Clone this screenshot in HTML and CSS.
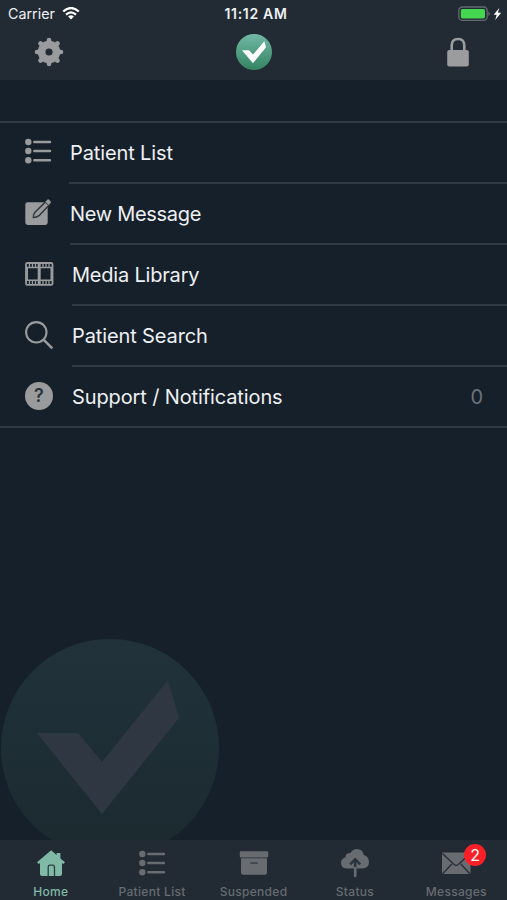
FILE: index.html
```
<!DOCTYPE html>
<html lang="en">
<head>
    <meta charset="utf-8">
    <meta name="viewport" content="width=device-width, initial-scale=1.0">
    <title>Home</title>
    <link rel="stylesheet" href="styles.css">
</head>
<body>

<svg class="defs" width="0" height="0">
    <defs>
        <linearGradient id="green" x1="0" y1="0" x2="0" y2="1">
            <stop offset="0" stop-color="#72b8a5"/>
            <stop offset="1" stop-color="#338462"/>
        </linearGradient>
        <linearGradient id="dark-green" x1="0" y1="0" x2="0" y2="1">
            <stop offset="0" stop-color="#21323b"/>
            <stop offset="1" stop-color="#1b2a2f"/>
        </linearGradient>
        <symbol id="list" viewBox="0 0 28 28">
            <g fill="currentColor">
                <circle cx="4.3" cy="4" r="3.2"/>
                <circle cx="4.3" cy="13" r="3.2"/>
                <circle cx="4.3" cy="22.2" r="3.2"/>
            </g>
            <path d="M10.3 4H26M10.3 13H26M10.3 22.2H26" stroke="currentColor" stroke-width="2.4" stroke-linecap="round"/>
        </symbol>
    </defs>
</svg>

<div class="header">
    <div class="status-bar">
        <div class="carrier">
            <span>Carrier</span>
            <svg width="18" height="13" viewBox="0 0 18 13" fill="none" stroke="#fff">
                <path d="M1.2 4.5Q9-2.4 16.8 4.5" stroke-width="2.3"/>
                <path d="M4 7.6Q9 3.2 14 7.6" stroke-width="2.1"/>
                <path d="M6.1 9.6Q9 7 11.9 9.6L9 12.6Z" fill="#fff" stroke="none"/>
            </svg>
        </div>
        <div class="time">11:12 AM</div>
        <div class="battery">
            <svg width="49" height="16" viewBox="0 0 49 16">
                <rect x=".8" y="1" width="28.4" height="13.4" rx="3.6" fill="none" stroke="#626a70" stroke-width="1.3"/>
                <rect x="2.8" y="3" width="24.2" height="9.4" rx="1.6" fill="#45d74f"/>
                <path d="M30.4 5.5Q32 6.2 32 7.7T30.4 9.9Z" fill="#626a70"/>
                <path d="M41.3 2L35.7 8.8H38.7L37.2 14L43.2 6.8H39.9Z" fill="#fff"/>
            </svg>
        </div>
    </div>
    <div class="nav-bar">
        <svg width="30" height="30" viewBox="-15 -15 30 30">
            <g fill="none" stroke="#999b9c">
                <circle r="7.4" stroke-width="7.6"/>
                <path d="M0-10V-12M0 10V12M-10 0H-12M10 0H12M-7.300-7.300L-8.500-8.500M7.300-7.300L8.500-8.500M-7.300 7.300L-8.500 8.500M7.300 7.300L8.500 8.500" stroke-width="4.600" stroke-linecap="round"/>
            </g>
        </svg>
        <svg width="36" height="36" viewBox="0 0 36 36">
            <circle cx="18" cy="18" r="18" fill="url(#green)"/>
            <path d="M6 16.3H13L17 20.6L28.3 7.3L30 13.3L17 29.3Z" fill="#fff"/>
        </svg>
        <svg width="30" height="30" viewBox="0 0 30 30" fill="#9b9c9e">
            <path d="M8.7 14V8.5Q8.7 2 15 2T21.3 8.5V14" fill="none" stroke="#9b9c9e" stroke-width="2.6"/>
            <rect x="4.2" y="13" width="21.6" height="16.5" rx="2"/>
        </svg>
    </div>
</div>

<div class="content">
    <div class="menu">
        <div class="row row-list">
            <svg class="icon" width="28" height="28"><use href="#list"/></svg>
            <div class="label">Patient List</div>
        </div>
        <div class="row row-message">
            <svg class="icon" width="28" height="28" viewBox="0 0 28 28">
                <rect x="1.3" y="4.3" width="22.4" height="22.7" rx="2.4" fill="#999b9d"/>
                <path d="M21.5 3.9L25 7.2L15 17.7Q12.5 19.6 9.3 19.5Q9 16.5 11 14.2Z" fill="#999b9d" stroke="#30383f" stroke-width="1.5" stroke-linejoin="round"/>
                <path d="M21.4 3.8L23.3 1.7Q24.2 1 25.1 1.8L26.5 3.2Q27.3 4.1 26.6 4.9L24.7 7Z" fill="#999b9d"/>
            </svg>
            <div class="label">New Message</div>
        </div>
        <div class="row row-media">
            <svg class="icon" width="30" height="28" viewBox="0 0 30 28" fill="none" stroke="#999b9d">
                <rect x="2" y="3" width="26.5" height="21.8" rx="1.3" stroke-width="1.8"/>
                <path d="M2 7.5H28.5M2 20.3H28.5" stroke-width="1.4"/>
                <path d="M3.2 7V21M27.3 7V21" stroke-width="1.6"/>
                <path d="M15.2 3V25" stroke-width="3"/>
                <path d="M5.5 3V7.5M8.5 3V7.5M11.5 3V7.5M19 3V7.5M22 3V7.5M25 3V7.5M5.5 20V25M8.5 20V25M11.5 20V25M19 20V25M22 20V25M25 20V25" stroke-width="1.3"/>
            </svg>
            <div class="label">Media Library</div>
        </div>
        <div class="row row-search">
            <svg class="icon" width="30" height="30" viewBox="0 0 30 30" fill="none" stroke="#999b9d">
                <circle cx="12.3" cy="12.3" r="10.2" stroke-width="2.1"/>
                <path d="M19.8 19.8L28.3 28.3" stroke-width="2.6"/>
            </svg>
            <div class="label">Patient Search</div>
        </div>
        <div class="row row-support">
            <div class="help icon">?</div>
            <div class="label">Support / Notifications<span class="count">0</span></div>
        </div>
    </div>
    <svg class="watermark" width="220" height="220" viewBox="0 0 220 220">
        <circle cx="110" cy="110" r="109" fill="url(#dark-green)"/>
        <path d="M37 95H78L102 124L168 42L179 80L102 176Z" fill="#2f3742"/>
    </svg>
</div>

<div class="tab-bar">
    <div class="tab active">
        <svg width="30" height="30" viewBox="0 0 30 30">
            <path d="M15.2 2.3L20.6 7V5H24.4V10.5L29 14.3L27.3 16L26 15V26Q26 28 24 28H6Q4 28 4 26V15L2.7 16L1 14.3Z" fill="#80b9a5"/>
            <path d="M12.2 28V19Q12.2 17.2 14 17.2H16.7Q18.5 17.2 18.5 19V28" fill="none" stroke="#29403f" stroke-width="1.3"/>
        </svg>
        <span>Home</span>
    </div>
    <div class="tab">
        <svg width="28" height="30"><use href="#list" y="1"/></svg>
        <span>Patient List</span>
    </div>
    <div class="tab">
        <svg width="30" height="30" viewBox="0 0 30 30" fill="currentColor">
            <rect x=".8" y="3.2" width="28.4" height="6.4" rx="1"/>
            <path d="M2 10.3H28V24.5Q28 26.8 25.7 26.8H4.3Q2 26.8 2 24.5Z"/>
            <path d="M12 15H18" stroke="#343c44" stroke-width="1.7" stroke-linecap="round"/>
        </svg>
        <span>Suspended</span>
    </div>
    <div class="tab">
        <svg width="30" height="30" viewBox="0 0 30 30" fill="currentColor">
            <path d="M7.5 20.5Q1 20.5 1 15Q1 10.7 5.3 9.5Q5.7 4.8 10.5 5.1Q12.5 1 17 1Q22.7 1 23.8 7Q29 8.8 29 14.1Q29 20.5 22 20.5Z"/>
            <path d="M15.2 21V12" fill="none" stroke="#2a333b" stroke-width="2.6"/>
            <path d="M15.2 28V20" fill="none" stroke="currentColor" stroke-width="2.7" stroke-linecap="round"/>
            <path d="M10.2 16.3L15.2 11.3L20.2 16.3" fill="none" stroke="#2a333b" stroke-width="2.5"/>
        </svg>
        <span>Status</span>
    </div>
    <div class="tab">
        <div class="mail">
            <svg width="30" height="30" viewBox="0 0 30 30">
                <rect x="1" y="4.5" width="28.5" height="21.5" rx="1" fill="currentColor"/>
                <path d="M1.5 5.5L13 16.5Q15.2 18.3 17.4 16.5L29 5.5M1.5 26L10.8 16M29 26L19.8 16" fill="none" stroke="#293139" stroke-width="1.5"/>
            </svg>
            <span class="badge">2</span>
        </div>
        <span>Messages</span>
    </div>
</div>

</body>
</html>
```
FILE: styles.css
```
* {
    box-sizing: border-box;
}
body {
    margin: 0;
    height: 900px;
    display: flex;
    flex-direction: column;
    overflow: hidden;
    background: #16202a;
    color: #eef0f3;
    font-family: Inter, "Liberation Sans", sans-serif;
}
svg {
    display: block;
    flex: none;
}
.defs {
    position: absolute;
}
.header {
    height: 80px;
    flex: none;
    background: #222a34;
}
.status-bar {
    display: grid;
    grid-template-columns: 1fr auto 1fr;
    align-items: center;
    height: 27px;
    padding: 0 0 0 8px;
    font-size: 14.3px;
}
.carrier {
    display: flex;
    align-items: center;
    gap: 7px;
}
.time {
    margin-right: 3px;
    font-size: 14px;
    font-weight: 600;
    letter-spacing: 0.7px;
}
.battery {
    display: flex;
    justify-content: flex-end;
}
.nav-bar {
    display: flex;
    align-items: center;
    justify-content: space-between;
    height: 50px;
    padding: 0 34px;
}
.content {
    flex: 1;
    position: relative;
    overflow: hidden;
    padding-top: 41px;
}
.menu {
    border-top: 2px solid #303a44;
    border-bottom: 2px solid #303a44;
}
.row {
    display: flex;
    align-items: center;
    height: 61px;
    padding-left: 24px;
    color: #999b9d;
}
.row:last-child {
    height: 59px;
}
.icon {
    margin-bottom: 3px;
}
.row-message .icon {
    margin-bottom: 6px;
}
.row-search .icon,
.row-media .icon {
    margin-bottom: 4px;
}
.label {
    flex: 1;
    display: flex;
    align-items: center;
    justify-content: space-between;
    height: 61px;
    margin-left: 18px;
    padding-right: 24px;
    border-bottom: 2px solid #303a44;
    color: #eef0f3;
    font-size: 20px;
    letter-spacing: -0.12px;
}
.row-list .label {
    margin-left: 17px;
    padding-left: 1px;
}
.row-message .label {
    letter-spacing: -0.3px;
}
.row-media .label {
    letter-spacing: -0.2px;
}
.row-support .label {
    height: 59px;
    padding-top: 1px;
    border-bottom: none;
}
.help {
    display: flex;
    align-items: center;
    justify-content: center;
    width: 28px;
    height: 28px;
    margin-bottom: 2px;
    margin-left: 1px;
    margin-right: 1px;
    border-radius: 50%;
    background: #999b9d;
    color: #2b333a;
    font-size: 18px;
    font-weight: 600;
}
.count {
    color: #6b737b;
}
.watermark {
    position: absolute;
    left: 0;
    top: 558px;
}
.tab-bar {
    display: flex;
    height: 60px;
    flex: none;
    background: #222a34;
}
.tab {
    flex: 1;
    display: flex;
    flex-direction: column;
    align-items: center;
    padding-top: 8px;
    color: #686c71;
    font-size: 12px;
    font-weight: 500;
    letter-spacing: 0.3px;
    line-height: 15px;
}
.tab > span {
    margin-top: 6px;
}
.active {
    color: #80b9a5;
}
.mail {
    position: relative;
}
.badge {
    position: absolute;
    left: 23px;
    top: -4px;
    width: 22px;
    height: 22px;
    border-radius: 50%;
    background: #fb2028;
    color: #fff;
    font-size: 16px;
    font-weight: 400;
    line-height: 22px;
    text-align: center;
}
```
